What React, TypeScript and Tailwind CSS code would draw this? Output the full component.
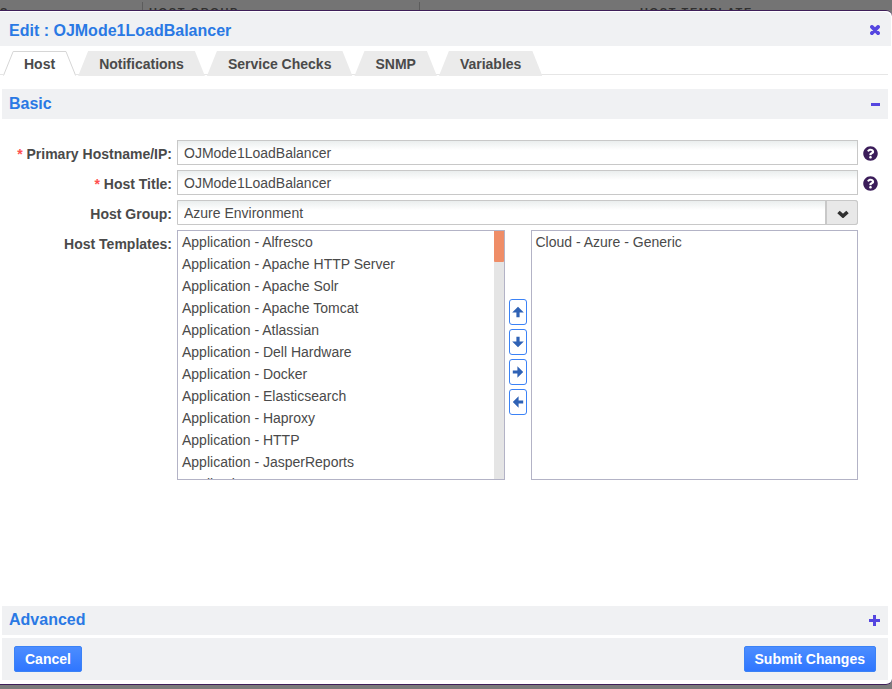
import { useState } from "react";
import type { ReactNode } from "react";
import { FaQuestionCircle } from "react-icons/fa";

const TABS = ["Host", "Notifications", "Service Checks", "SNMP", "Variables"];

const AVAILABLE = [
  "Application - Alfresco",
  "Application - Apache HTTP Server",
  "Application - Apache Solr",
  "Application - Apache Tomcat",
  "Application - Atlassian",
  "Application - Dell Hardware",
  "Application - Docker",
  "Application - Elasticsearch",
  "Application - Haproxy",
  "Application - HTTP",
  "Application - JasperReports",
  "Application - Java",
];

const ARROWS = [
  { label: "Move up", turn: "" },
  { label: "Move down", turn: "rotate-180" },
  { label: "Add template", turn: "rotate-90" },
  { label: "Remove template", turn: "-rotate-90" },
];

const inputClass =
  "block h-[25px] w-full border border-[#c8c8c8] bg-linear-to-b from-[#eaeeee] to-white to-40% px-1.5 text-sm leading-5 text-[#4a4a4a] outline-none";

const optionClass = "h-[22px] px-1 pb-0 pt-[3px] leading-4";

const actionClass =
  "h-[26px] rounded-xs border border-[#3b82f6] bg-linear-to-b from-[#4c8dff] to-[#2f76ff] px-2.5 text-sm font-bold leading-6 text-white";

function Tab({ name, active, onSelect }: { name: string; active: boolean; onSelect: () => void }) {
  return (
    <button
      type="button"
      role="tab"
      aria-selected={active}
      onClick={onSelect}
      className={
        "relative h-[25px] px-[21px] pt-0.5 text-sm font-bold leading-[23px] " +
        (active
          ? "bg-white"
          : "bg-[#ebebeb] [clip-path:polygon(10px_0,calc(100%_-_10px)_0,100%_100%,0_100%)]")
      }
    >
      {active && (
        <svg className="absolute inset-0 size-full" viewBox="0 0 72 25" preserveAspectRatio="none" fill="none">
          <path d="M0.5 24.5L10 0.5H62L71.5 24.5" stroke="#d6d6d6" vectorEffect="non-scaling-stroke" />
        </svg>
      )}
      <span className="relative">{name}</span>
    </button>
  );
}

function Row({ id, label, required, help, children }: {
  id: string;
  label: string;
  required?: boolean;
  help?: boolean;
  children: ReactNode;
}) {
  return (
    <div className="flex gap-[5px]">
      <label htmlFor={id} className="w-[172px] shrink-0 pt-1 text-right text-sm font-bold leading-5">
        {required && <span className="text-[#ff4f4f]">* </span>}
        {label}:
      </label>
      <div className="min-w-0 flex-1">{children}</div>
      <div className="flex w-[25px] shrink-0 items-start pt-1.5">
        {help && (
          <button type="button" aria-label={`Help: ${label}`} className="text-[#3b1d5a]">
            <FaQuestionCircle size={15} />
          </button>
        )}
      </div>
    </div>
  );
}

export default function App() {
  const [tab, setTab] = useState("Host");
  return (
    <div className="flex min-h-screen flex-col bg-[#7b7b7b] pb-1 font-['Liberation_Sans',Arial,sans-serif] text-[#4a4a4a]">
      <div className="grid h-2.5 grid-cols-[142px_277px_1fr] overflow-hidden bg-[#747474] pt-0.5 text-[11px] font-bold leading-3 tracking-[1.6px] text-[#303030]">
        <span className="pt-1">S</span>
        <span className="border-l border-[#5c5c5c] pl-1.5 pt-1">HOST GROUP</span>
        <span className="border-l border-[#5c5c5c] pl-[220px] pt-1">HOST TEMPLATE</span>
      </div>

      <form
        onSubmit={(e) => e.preventDefault()}
        className="flex flex-1 flex-col rounded-r-md border-y border-[#3f1f59] bg-white pt-px"
      >
        <header className="mr-px flex h-[34px] items-center justify-between rounded-tr-md bg-[#f0f1f3] pl-[9px] pr-[11px] pt-[3px]">
          <h1 className="text-base font-bold text-[#2a79e4]">Edit : OJMode1LoadBalancer</h1>
          <button type="button" aria-label="Close" className="pb-0.5 text-[#5546e0]">
            <svg width="10" height="10" viewBox="0 0 10 10" fill="none">
              <path d="M1.9 1.9L8.1 8.1M8.1 1.9L1.9 8.1" stroke="currentColor" strokeWidth="3.7" strokeLinecap="round" />
            </svg>
          </button>
        </header>

        <div role="tablist" className="mr-1 mt-[5px] flex gap-0.5 bg-linear-to-b from-white from-[23px] via-[#e6e6e6] via-[23px] to-[#e6e6e6] to-[24px] bg-[length:100%_24px] bg-no-repeat pl-[3px]">
          {TABS.map((t) => (
            <Tab key={t} name={t} active={t === tab} onSelect={() => setTab(t)} />
          ))}
        </div>

        <section className="ml-0.5 mr-1 mt-[13px] flex flex-1 flex-col">
          <div className="flex h-[30px] items-center justify-between bg-[#f0f1f3] pl-[7px] pr-2">
            <h2 className="text-base font-bold text-[#2a79e4]">Basic</h2>
            <button type="button" aria-label="Collapse Basic" className="text-[#5546e0]">
              <svg width="10" height="10" viewBox="0 0 10 10" fill="currentColor">
                <rect x="1" y="4" width="9" height="3" />
              </svg>
            </button>
          </div>
          <div className="-ml-0.5 flex flex-col gap-[5px] pb-4 pt-[21px]">
            <Row id="hostname" label="Primary Hostname/IP" required help>
              <input id="hostname" defaultValue="OJMode1LoadBalancer" className={inputClass} />
            </Row>
            <Row id="title" label="Host Title" required help>
              <input id="title" defaultValue="OJMode1LoadBalancer" className={inputClass} />
            </Row>
            <Row id="group" label="Host Group">
              <div className="relative">
                <select id="group" className={inputClass + " appearance-none rounded-r-[3px]"}>
                  <option>Azure Environment</option>
                </select>
                <span className="pointer-events-none absolute inset-y-0 right-0 flex w-[33px] items-center justify-center rounded-r-[3px] border border-l-2 border-[#c8c8c8] bg-[#e8e8e8]">
                  <svg className="mt-0.5" width="13" height="8" viewBox="0 0 13 8" fill="none">
                    <path d="M2.5 2L7 6L11.5 2" stroke="#303030" strokeWidth="3.6" strokeLinecap="butt" />
                  </svg>
                </span>
              </div>
            </Row>
            <Row id="templates" label="Host Templates">
              <div className="flex h-[250px] items-stretch gap-1">
                <div className="flex min-w-0 flex-1 border border-[#b3b3c6]">
                  <select id="templates" multiple className="h-full min-w-0 flex-1 overflow-hidden text-sm outline-none">
                    {AVAILABLE.map((a) => (
                      <option key={a} className={optionClass}>{a}</option>
                    ))}
                  </select>
                  <div className="w-2.5 bg-[#e5e5e5]">
                    <div className="h-[31px] rounded-b-[1px] bg-[#ef8d67]" />
                  </div>
                </div>
                <div className="flex flex-col justify-center gap-1 pt-1">
                  {ARROWS.map((a) => (
                    <button
                      key={a.label}
                      type="button"
                      aria-label={a.label}
                      className="flex h-[26px] w-[18px] items-center justify-center rounded-[3px] border border-[#3b82f6] bg-white"
                    >
                      <svg className={a.turn} width="12" height="12" viewBox="0 0 12 12" fill="#2f62b5">
                        <path d="M6 0.8L11.8 6.6H7.6V11.2H4.4V6.6H0.2Z" />
                      </svg>
                    </button>
                  ))}
                </div>
                <select
                  multiple
                  aria-label="Selected templates"
                  className="h-full min-w-0 flex-1 overflow-hidden border border-[#b3b3c6] text-sm outline-none"
                >
                  <option className={optionClass}>Cloud - Azure - Generic</option>
                </select>
              </div>
            </Row>
          </div>
        </section>

        <section className="ml-0.5 mr-1 flex h-[29px] items-center justify-between bg-[#f0f1f3] pl-[7px] pr-2">
          <h2 className="pb-0.5 text-base font-bold text-[#2a79e4]">Advanced</h2>
          <button type="button" aria-label="Expand Advanced" className="text-[#5546e0]">
            <svg width="11" height="11" viewBox="0 0 11 11" fill="currentColor">
              <path d="M4 0H7V4H11V7H7V11H4V7H0V4H4Z" />
            </svg>
          </button>
        </section>

        <footer className="mb-1 ml-0.5 mr-1 mt-[3px] flex h-[42px] items-center justify-between bg-[#f0f1f3] px-3">
          <button type="button" className={actionClass}>
            Cancel
          </button>
          <button type="submit" className={actionClass}>
            Submit Changes
          </button>
        </footer>
      </form>
    </div>
  );
}
